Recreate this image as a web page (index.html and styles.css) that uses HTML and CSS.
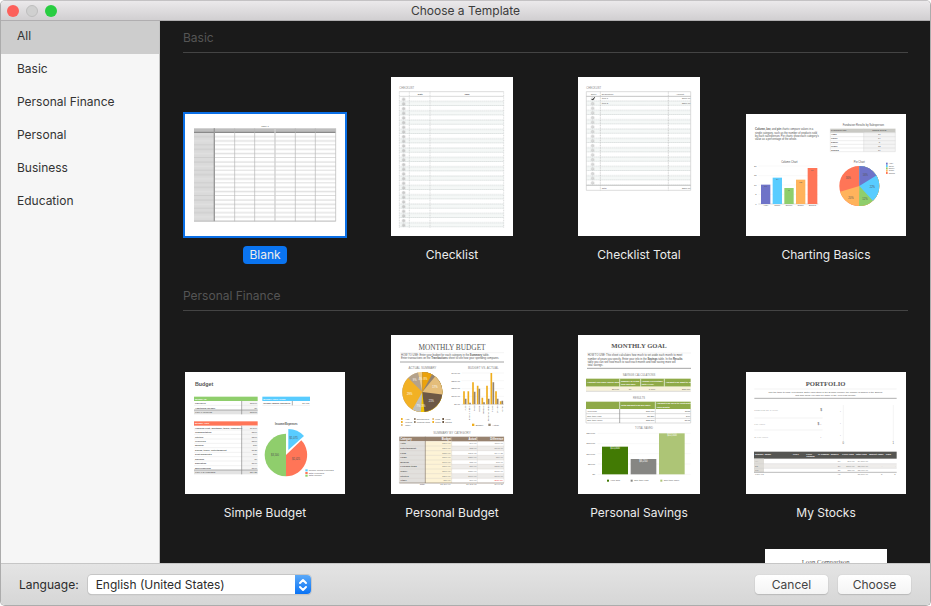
FILE: index.html
```html
<!DOCTYPE html>
<html lang="en">

<head>
    <meta charset="UTF-8">
    <meta name="viewport" content="width=device-width, initial-scale=1.0">
    <title>Choose a Template</title>
    <link rel="stylesheet" href="styles.css">
</head>

<body>

    <div class="window">
        <header class="titlebar">
            <div class="lights">
                <button type="button" class="light close" aria-label="Close"></button>
                <button type="button" class="light minimize" aria-label="Minimize" disabled></button>
                <button type="button" class="light zoom" aria-label="Zoom"></button>
            </div>
            <h1>Choose a Template</h1>
        </header>

        <div class="content">
            <nav class="sidebar">
                <a href="#all" class="active">All</a>
                <a href="#basic">Basic</a>
                <a href="#personal-finance">Personal Finance</a>
                <a href="#personal">Personal</a>
                <a href="#business">Business</a>
                <a href="#education">Education</a>
            </nav>

            <main class="templates">
                <section id="basic">
                    <h2>Basic</h2>
                    <div class="grid">
                        <button type="button" class="card selected">
                            <svg class="sheet landscape" viewBox="30 42 480 366">
                                <defs>
                                    <pattern id="blankRows" patternUnits="userSpaceOnUse" x="57" y="98" width="425" height="38">
                                        <path d="M0 12h425M0 37h425" stroke="#c2c2c2" stroke-width="2" />
                                        <path d="M0 25h425" stroke="#e0e0e0" stroke-width="4" />
                                    </pattern>
                                </defs>
                                <text x="270" y="80" class="mid t7">Table 1</text>
                                <rect x="57" y="85" width="425" height="12" fill="#bdbdbd" />
                                <rect x="57" y="98" width="61" height="266" fill="#dadada" />
                                <rect x="57" y="98" width="425" height="266" fill="url(#blankRows)" />
                                <path d="M57 97h425" stroke="#777" stroke-width="3" />
                                <path d="M118 85v279" stroke="#999" stroke-width="4" />
                                <path d="M179 85v279M239 85v279M361 85v279M421 85v279M482 85v279M57 364h425" stroke="#b4b4b4" stroke-width="2" />
                                <path d="M300 85v279" stroke="#d0d0d0" stroke-width="4" />
                            </svg>
                            <span>Blank</span>
                        </button>

                        <button type="button" class="card">
                            <svg class="sheet portrait" viewBox="33 21 366 477">
                                <defs>
                                    <pattern id="checkRows" patternUnits="userSpaceOnUse" x="58" y="80" width="313" height="28">
                                        <rect y="14" width="313" height="14" fill="#f5f8f7" />
                                        <path d="M0 14h313M0 27h313" stroke="#c4c9c9" stroke-width="2" stroke-dasharray="4 2" />
                                        <circle cx="13" cy="8" r="4" fill="#ccc" stroke="#999" />
                                        <circle cx="13" cy="22" r="4" fill="#ccc" stroke="#999" />
                                    </pattern>
                                </defs>
                                <text x="58" y="58" class="t8 light-text">CHECKLIST</text>
                                <rect x="58" y="80" width="313" height="393" fill="url(#checkRows)" />
                                <path d="M58 65h313M58 79h313" stroke="#ccc" stroke-width="2" />
                                <path d="M58 65v408M88 65v408M150 65v408M371 65v408" stroke="#c8cccc" stroke-width="2" stroke-dasharray="3 2" />
                                <text x="121" y="75" class="mid t7 bold">Date</text>
                                <text x="261" y="75" class="mid t7 bold">Task</text>
                            </svg>
                            <span>Checklist</span>
                        </button>

                        <button type="button" class="card">
                            <svg class="sheet portrait" viewBox="33 21 366 477">
                                <defs>
                                    <pattern id="totalRows" patternUnits="userSpaceOnUse" x="58" y="79" width="313" height="28">
                                        <rect y="14" width="313" height="14" fill="#f5f8f7" />
                                        <path d="M0 14h313M0 27h313" stroke="#c4c9c9" stroke-width="2" stroke-dasharray="4 2" />
                                        <circle cx="19" cy="8" r="4" fill="#ddd" stroke="#999" />
                                        <circle cx="19" cy="22" r="4" fill="#ddd" stroke="#999" />
                                    </pattern>
                                </defs>
                                <text x="58" y="58" class="t8 light-text">CHECKLIST</text>
                                <rect x="58" y="79" width="313" height="267" fill="url(#totalRows)" />
                                <path d="M58 65h313M58 361h313M58 65v296M371 65v296" stroke="#ccc" stroke-width="2" fill="none" />
                                <path d="M58 79h313M58 346h313" stroke="#aaa" stroke-width="2" />
                                <path d="M100 65v296M304 65v296" stroke="#bbb" stroke-width="2" stroke-dasharray="3 2" />
                                <path d="M74 87l3 3 6-8" stroke="#222" stroke-width="3" fill="none" />
                                <text x="80" y="74" class="mid t7">Done</text>
                                <text x="104" y="74" class="t7">Description</text>
                                <text x="339" y="74" class="mid t7">Amount</text>
                                <text class="t7"><tspan x="104" y="88">Item 1</tspan><tspan x="104" y="102">Item 2</tspan><tspan x="104" y="356">Total</tspan></text>
                                <text class="end t7"><tspan x="370" y="88">$100.00</tspan><tspan x="370" y="102">$200.00</tspan><tspan x="370" y="356">$300.00</tspan></text>
                            </svg>
                            <span>Checklist Total</span>
                        </button>

                        <button type="button" class="card">
                            <svg class="sheet landscape" viewBox="33 27 480 366">
                                <text class="t8"><tspan x="60" y="76"><tspan class="bold">Column, bar,</tspan> and <tspan class="bold">pie</tspan> charts compare values in a</tspan><tspan x="60" y="86">single category, such as the number of products sold</tspan><tspan x="60" y="95">by each salesperson. Pie charts show each category’s</tspan><tspan x="60" y="104">value as a percentage of the whole.</tspan></text>
                                <text x="385" y="64" class="mid t8">Fundraiser Results by Salesperson</text>
                                <rect x="286" y="71" width="195" height="12" fill="#c9c9c4" />
                                <rect x="386" y="83" width="95" height="57" fill="#f4f4f4" />
                                <path d="M286 83h195M286 95h195M286 107h195M286 118h195M286 129h195M286 140h195M286 71v69M386 71v69M481 71v69" stroke="#ccc" fill="none" />
                                <text class="t7 bold"><tspan x="288" y="79">PARTICIPANT</tspan><tspan x="288" y="91">Andy</tspan><tspan x="288" y="103">Chloe</tspan><tspan x="288" y="115">Daniel</tspan><tspan x="288" y="126">Grace</tspan><tspan x="288" y="137">Sophia</tspan></text>
                                <text class="mid t7"><tspan x="433" y="79" class="bold">UNITS SOLD</tspan><tspan x="433" y="91">10</tspan><tspan x="433" y="103">14</tspan><tspan x="433" y="115">8</tspan><tspan x="433" y="126">13</tspan><tspan x="433" y="137">19</tspan></text>

                                <text x="163" y="174" class="mid t8">Column Chart</text>
                                <path d="M70 183h180M70 212h180M70 240h180M70 268h180" stroke="#eee" />
                                <path d="M70 297h180" stroke="#999" />
                                <rect x="78" y="239" width="28" height="58" fill="#6e73c8" />
                                <rect x="113" y="218" width="28" height="79" fill="#58ccff" />
                                <rect x="148" y="249" width="28" height="48" fill="#8fce6c" />
                                <rect x="183" y="224" width="28" height="73" fill="#ffb35c" />
                                <rect x="218" y="189" width="29" height="108" fill="#ff7557" />
                                <text class="mid t7"><tspan x="92" y="247">10</tspan><tspan x="127" y="226">14</tspan><tspan x="162" y="257">8</tspan><tspan x="197" y="233">13</tspan><tspan x="232" y="198">19</tspan><tspan x="92" y="304">Andy</tspan><tspan x="127" y="304">Chloe</tspan><tspan x="162" y="304">Daniel</tspan><tspan x="197" y="304">Grace</tspan><tspan x="232" y="304">Sophia</tspan></text>
                                <text class="end t7"><tspan x="65" y="186">20</tspan><tspan x="65" y="214">15</tspan><tspan x="65" y="242">10</tspan><tspan x="65" y="271">5</tspan><tspan x="65" y="299">0</tspan></text>

                                <text x="373" y="174" class="mid t8">Pie Chart</text>
                                <g class="pie" transform="rotate(-90 373 243)" stroke-width="60">
                                    <circle cx="373" cy="243" r="30" pathLength="100" stroke="#ff7557" />
                                    <circle cx="373" cy="243" r="30" pathLength="100" stroke="#ffb35c" stroke-dasharray="70 100" />
                                    <circle cx="373" cy="243" r="30" pathLength="100" stroke="#8fce6c" stroke-dasharray="50 100" />
                                    <circle cx="373" cy="243" r="30" pathLength="100" stroke="#58ccff" stroke-dasharray="38 100" />
                                    <circle cx="373" cy="243" r="30" pathLength="100" stroke="#6e73c8" stroke-dasharray="16 100" />
                                </g>
                                <text class="mid t8"><tspan x="391" y="212">16%</tspan><tspan x="412" y="250">22%</tspan><tspan x="390" y="284">12%</tspan><tspan x="348" y="282">20%</tspan><tspan x="340" y="223">30%</tspan></text>
                                <rect x="453" y="173" width="5" height="6" fill="#6e73c8" />
                                <rect x="453" y="180" width="5" height="6" fill="#58ccff" />
                                <rect x="453" y="187" width="5" height="6" fill="#8fce6c" />
                                <rect x="453" y="194" width="5" height="6" fill="#ffb35c" />
                                <rect x="453" y="201" width="5" height="6" fill="#ff7557" />
                                <text class="t6"><tspan x="461" y="178">Andy</tspan><tspan x="461" y="185">Chloe</tspan><tspan x="461" y="192">Daniel</tspan><tspan x="461" y="199">Grace</tspan><tspan x="461" y="206">Sophia</tspan></text>
                            </svg>
                            <span>Charting Basics</span>
                        </button>
                    </div>
                </section>

                <section id="personal-finance">
                    <h2>Personal Finance</h2>
                    <div class="grid">
                        <button type="button" class="card">
                            <svg class="sheet landscape" viewBox="30 34 480 366">
                                <text x="60" y="77" class="t16 medium">Budget</text>
                                <rect x="57" y="108" width="191" height="13" fill="#8fce6c" />
                                <rect x="262" y="108" width="143" height="13" fill="#58ccff" />
                                <rect x="57" y="182" width="191" height="13" fill="#ff7557" />
                                <text class="t7 bold white"><tspan x="60" y="117">MONEY IN</tspan><tspan x="265" y="117">MONEY LEFT OVER</tspan><tspan x="60" y="190">MONEY OUT</tspan></text>
                                <rect x="200" y="121" width="48" height="26" fill="#f5f5f5" />
                                <rect x="200" y="195" width="48" height="132" fill="#f5f5f5" />
                                <rect x="57" y="148" width="191" height="13" fill="#e3e3e3" />
                                <rect x="57" y="328" width="191" height="13" fill="#e3e3e3" />
                                <path d="M57 134h191M262 134h143M57 208h191M57 221h191M57 235h191M57 248h191M57 261h191M57 275h191M57 288h191M57 301h191M57 315h191" stroke="#d5d5d5" />
                                <path d="M200 121v40M200 195v146M352 121v13M57 148h191M57 328h191" stroke="#888" stroke-width="2" />
                                <text class="t7 bold"><tspan x="60" y="131">Paycheck</tspan><tspan x="60" y="144">Additional income</tspan><tspan x="265" y="131">Income minus expenses</tspan><tspan x="60" y="205">Housing (rent, mortgage, taxes, insurance)</tspan><tspan x="60" y="218">Transportation</tspan><tspan x="60" y="231">Utilities</tspan><tspan x="60" y="244">Groceries</tspan><tspan x="60" y="257">Medical</tspan><tspan x="60" y="271">Dining, travel, entertainment</tspan><tspan x="60" y="284">Debt payments</tspan><tspan x="60" y="297">Savings</tspan><tspan x="60" y="311">Education</tspan><tspan x="60" y="325">Miscellaneous</tspan></text>
                                <text class="t7"><tspan x="60" y="157">TOTAL INCOME</tspan><tspan x="60" y="337">TOTAL EXPENSES</tspan></text>
                                <text class="end t7"><tspan x="246" y="131">$3,500</tspan><tspan x="246" y="144">$0</tspan><tspan x="246" y="157">$3,500</tspan><tspan x="403" y="131">$1,075</tspan><tspan x="246" y="205">$1,200</tspan><tspan x="246" y="218">$300</tspan><tspan x="246" y="231">$200</tspan><tspan x="246" y="244">$300</tspan><tspan x="246" y="257">$50</tspan><tspan x="246" y="271">$125</tspan><tspan x="246" y="284">$50</tspan><tspan x="246" y="297">$0</tspan><tspan x="246" y="311">$100</tspan><tspan x="246" y="325">$100</tspan><tspan x="246" y="337">$2,425</tspan></text>
                                <text x="334" y="194" class="mid t8 bold">Income/Expenses</text>
                                <path d="M333 283V219A64 64 0 0 0 333 347Z" fill="#8fce6c" />
                                <path d="M333 283V347A64 64 0 0 0 379 239Z" fill="#ff7557" />
                                <path d="M340 268V205A63 63 0 0 1 387 226Z" fill="#58ccff" />
                                <text class="mid t8"><tspan x="300" y="287">$3,500</tspan><tspan x="363" y="299">$2,425</tspan><tspan x="356" y="236">$1,075</tspan></text>
                                <rect x="391" y="326" width="7" height="6" fill="#58ccff" />
                                <rect x="391" y="334" width="7" height="6" fill="#ff7557" />
                                <rect x="391" y="342" width="7" height="6" fill="#8fce6c" />
                                <text class="t7"><tspan x="401" y="331">Income minus expenses</tspan><tspan x="401" y="339">Total expenses</tspan><tspan x="401" y="347">Total income</tspan></text>
                            </svg>
                            <span>Simple Budget</span>
                        </button>

                        <button type="button" class="card">
                            <svg class="sheet portrait" viewBox="33 28 366 477">
                                <text x="216" y="72" class="mid serif t22">MONTHLY BUDGET</text>
                                <path d="M60 81h312" stroke="#ddd" />
                                <path d="M60 109h312" stroke="#777" stroke-width="2" />
                                <text class="t8"><tspan x="63" y="91">HOW TO USE: Enter your budget for each category in the <tspan class="bold">Summary</tspan> table.</tspan><tspan x="63" y="101">Enter transactions on the <tspan class="bold">Transactions</tspan> sheet to see how your spending compares.</tspan></text>
                                <text class="mid t9 light-text"><tspan x="127" y="131">ACTUAL SUMMARY</tspan><tspan x="310" y="131">BUDGET VS. ACTUAL</tspan><tspan x="216" y="325">SUMMARY BY CATEGORY</tspan></text>
                                <g class="pie" transform="rotate(-90 127 199)" stroke-width="60">
                                    <circle cx="127" cy="199" r="30" pathLength="100" stroke="#eecb88" />
                                    <circle cx="127" cy="199" r="30" pathLength="100" stroke="#b4a28c" stroke-dasharray="96 100" />
                                    <circle cx="127" cy="199" r="30" pathLength="100" stroke="#f2b124" stroke-dasharray="87 100" />
                                    <circle cx="127" cy="199" r="30" pathLength="100" stroke="#bfbfbb" stroke-dasharray="58 100" />
                                    <circle cx="127" cy="199" r="30" pathLength="100" stroke="#f2c400" stroke-dasharray="51 100" />
                                    <circle cx="127" cy="199" r="30" pathLength="100" stroke="#6d5845" stroke-dasharray="48 100" />
                                    <circle cx="127" cy="199" r="30" pathLength="100" stroke="#e4bd7a" stroke-dasharray="27 100" />
                                    <circle cx="127" cy="199" r="30" pathLength="100" stroke="#94836f" stroke-dasharray="11 100" />
                                    <circle cx="127" cy="199" r="30" pathLength="100" stroke="#eba20c" stroke-dasharray="8 100" />
                                </g>
                                <text class="mid t8 white"><tspan x="89" y="209">29%</tspan><tspan x="154" y="229">21%</tspan><tspan x="165" y="187">17%</tspan><tspan x="104" y="167">9%</tspan><tspan x="121" y="163">4%</tspan><tspan x="136" y="163">8%</tspan><tspan x="115" y="243">7%</tspan><tspan x="130" y="243">3%</tspan></text>
                                <path d="M63 280h5M63 289h5M157 289h5" stroke="#f2b124" stroke-width="6" />
                                <path d="M102 280h5M102 289h5" stroke="#94836f" stroke-width="6" />
                                <path d="M157 280h5M63 298h5" stroke="#e4bd7a" stroke-width="6" />
                                <path d="M187 280h5M187 289h5" stroke="#6d5845" stroke-width="6" />
                                <text class="t6"><tspan x="76" y="282">Auto</tspan><tspan x="110" y="282">Entertainment</tspan><tspan x="166" y="282">Food</tspan><tspan x="196" y="282">Home</tspan><tspan x="76" y="291">Medical</tspan><tspan x="110" y="291">Personal Items</tspan><tspan x="166" y="291">Travel</tspan><tspan x="196" y="291">Utilities</tspan><tspan x="76" y="300">Other</tspan></text>

                                <path d="M245 142h127M245 165h127M245 189h127M245 212h127" stroke="#e8e8e8" />
                                <path d="M245 236h127" stroke="#aaa" />
                                <path d="M252 236v-39M265 236v-39M279 236v-66M293 236v-56M307 236v-20M321 236v-56M334 236v-94M348 236v-39M362 236v-9" stroke="#f0ad1c" stroke-width="5" />
                                <path d="M257 236v-17M270 236v-5M284 236v-38M298 236v-47M312 236v-6M326 236v-17M340 236v-66M353 236v-17M367 236v-11" stroke="#94836f" stroke-width="5" />
                                <text class="end t7"><tspan x="240" y="144">$400.00</tspan><tspan x="240" y="168">$300.00</tspan><tspan x="240" y="191">$200.00</tspan><tspan x="240" y="214">$100.00</tspan><tspan x="240" y="238">$0.00</tspan></text>
                                <g class="end t7">
                                    <text transform="translate(257 240) rotate(-90)">Auto</text>
                                    <text transform="translate(271 240) rotate(-90)">Entertainment</text>
                                    <text transform="translate(285 240) rotate(-90)">Food</text>
                                    <text transform="translate(299 240) rotate(-90)">Home</text>
                                    <text transform="translate(313 240) rotate(-90)">Medical</text>
                                    <text transform="translate(326 240) rotate(-90)">Personal Items</text>
                                    <text transform="translate(340 240) rotate(-90)">Travel</text>
                                    <text transform="translate(354 240) rotate(-90)">Utilities</text>
                                    <text transform="translate(368 240) rotate(-90)">Other</text>
                                </g>
                                <rect x="276" y="294" width="7" height="7" fill="#f0ad1c" />
                                <rect x="325" y="294" width="7" height="7" fill="#94836f" />
                                <text class="t7"><tspan x="287" y="300">Budget</tspan><tspan x="337" y="300">Actual</tspan></text>

                                <rect x="58" y="333" width="314" height="14" fill="#97826f" />
                                <rect x="58" y="347" width="78" height="125" fill="#e2e0dd" />
                                <rect x="136" y="347" width="79" height="125" fill="#fdf3d6" />
                                <path d="M215 368h157M215 396h157M215 423h157M215 451h157" stroke="#eeecea" stroke-width="14" />
                                <path d="M58 361h314M58 375h314M58 389h314M58 403h314M58 416h314M58 430h314M58 444h314M58 458h314M58 347v125M215 333v139M292 333v139M372 333v139" stroke="#cfc9c2" fill="none" />
                                <path d="M136 333v139M58 472h314" stroke="#8a7a6a" stroke-width="2" />
                                <text class="t8 bold white"><tspan x="61" y="343">Category</tspan></text>
                                <text class="end t8 bold white"><tspan x="213" y="343">Budget</tspan><tspan x="290" y="343">Actual</tspan><tspan x="370" y="343">Difference</tspan></text>
                                <text class="t7 bold"><tspan x="61" y="356">Auto</tspan><tspan x="61" y="370">Entertainment</tspan><tspan x="61" y="384">Food</tspan><tspan x="61" y="398">Home</tspan><tspan x="61" y="412">Medical</tspan><tspan x="61" y="425">Personal Items</tspan><tspan x="61" y="439">Travel</tspan><tspan x="61" y="453">Utilities</tspan><tspan x="61" y="467">Other</tspan></text>
                                <text class="end t7 light-text"><tspan x="212" y="356">$200.00</tspan><tspan x="212" y="370">$200.00</tspan><tspan x="212" y="384">$350.00</tspan><tspan x="212" y="398">$300.00</tspan><tspan x="212" y="412">$100.00</tspan><tspan x="212" y="425">$300.00</tspan><tspan x="212" y="439">$500.00</tspan><tspan x="212" y="453">$200.00</tspan><tspan x="212" y="467">$50.00</tspan><tspan x="212" y="479">$2,200.00</tspan></text>
                                <text class="end t7 light-text"><tspan x="290" y="356">$90.00</tspan><tspan x="290" y="370">$32.00</tspan><tspan x="290" y="384">$205.75</tspan><tspan x="290" y="398">$250.00</tspan><tspan x="290" y="412">$35.00</tspan><tspan x="290" y="425">$80.00</tspan><tspan x="290" y="439">$350.00</tspan><tspan x="290" y="453">$100.00</tspan><tspan x="290" y="467">$60.00</tspan><tspan x="290" y="479">$1,202.75</tspan></text>
                                <text class="end t7 light-text"><tspan x="369" y="356">$110.00</tspan><tspan x="369" y="370">$168.00</tspan><tspan x="369" y="384">$144.25</tspan><tspan x="369" y="398">$50.00</tspan><tspan x="369" y="412">$65.00</tspan><tspan x="369" y="425">$220.00</tspan><tspan x="369" y="439">$150.00</tspan><tspan x="369" y="453">$100.00</tspan><tspan x="369" y="467" fill="#e33">($10.00)</tspan><tspan x="369" y="479">$997.25</tspan></text>
                                <text x="134" y="479" class="end t7">Total</text>
                            </svg>
                            <span>Personal Budget</span>
                        </button>

                        <button type="button" class="card">
                            <svg class="sheet portrait" viewBox="33 28 366 477">
                                <text x="216" y="68" class="mid serif t20 medium">MONTHLY GOAL</text>
                                <path d="M60 82h312" stroke="#ddd" />
                                <path d="M60 128h312" stroke="#777" stroke-width="2" />
                                <text class="t8"><tspan x="62" y="92">HOW TO USE: This sheet calculates how much to set aside each month to meet</tspan><tspan x="62" y="102">number of years you specify. Enter your info in the <tspan class="bold">Savings</tspan> table. In the <tspan class="bold">Results</tspan></tspan><tspan x="62" y="112">table you can see how much to save each month and how saving more will</tspan><tspan x="62" y="122">total savings.</tspan></text>
                                <text class="mid t8 light-text"><tspan x="216" y="152">SAVINGS CALCULATIONS</tspan><tspan x="216" y="219">RESULTS</tspan><tspan x="231" y="311">TOTAL SAVED</tspan></text>
                                <rect x="57" y="159" width="314" height="24" fill="#8faa48" />
                                <rect x="57" y="183" width="314" height="14" fill="#f8f2dc" />
                                <rect x="57" y="228" width="314" height="22" fill="#8faa48" />
                                <path d="M158 159v24M221 159v24M292 159v24M158 228v22M265 228v22" stroke="#fff" stroke-width="2" />
                                <path d="M57 197h314M57 264h314M57 278h314M57 292h314M57 250v42M265 250v42M371 250v42" stroke="#ccc" stroke-width="2" fill="none" />
                                <path d="M158 250v42" stroke="#888" stroke-width="2" />
                                <text class="t7 bold white"><tspan x="60" y="172">Amount you have saved now</tspan><tspan x="162" y="168">Number of years</tspan><tspan x="162" y="177">you can save</tspan><tspan x="224" y="168">Annual Percentage</tspan><tspan x="224" y="177">Rate (APR)</tspan><tspan x="296" y="172">Amount you want to save</tspan><tspan x="162" y="240">Total amount you will save</tspan><tspan x="269" y="236">Amount you need to contribute</tspan><tspan x="269" y="246">each month</tspan></text>
                                <text class="t7"><tspan x="60" y="259">Your goal</tspan><tspan x="60" y="273">One-time less</tspan><tspan x="60" y="287">One-time more</tspan></text>
                                <text class="end t7"><tspan x="156" y="192">$1,000</tspan><tspan x="193" y="192">10</tspan><tspan x="265" y="192">1.00%</tspan><tspan x="370" y="192">$15,000</tspan><tspan x="262" y="259">$15,000</tspan><tspan x="262" y="273">$8,250</tspan><tspan x="262" y="287">$22,500</tspan><tspan x="369" y="259">$115</tspan><tspan x="369" y="273">$60</tspan><tspan x="369" y="287">$175</tspan></text>
                                <path d="M92 323h279M92 354h279M92 384h279M92 415h279M92 446h279" stroke="#e8e8e8" />
                                <rect x="105" y="363" width="78" height="83" fill="#427a04" />
                                <rect x="191" y="400" width="77" height="46" fill="#868683" />
                                <rect x="276" y="323" width="77" height="123" fill="#adc576" />
                                <text class="mid t8 white"><tspan x="144" y="371">$15,000</tspan><tspan x="229" y="409">$8,250</tspan><tspan x="315" y="332">$22,500</tspan></text>
                                <text class="end t7"><tspan x="84" y="325">$20,000</tspan><tspan x="84" y="356">$15,000</tspan><tspan x="84" y="387">$10,000</tspan><tspan x="84" y="417">$5,000</tspan><tspan x="84" y="448">$0</tspan></text>
                                <rect x="120" y="462" width="6" height="6" fill="#427a04" />
                                <rect x="191" y="462" width="6" height="6" fill="#868683" />
                                <rect x="280" y="462" width="6" height="6" fill="#adc576" />
                                <text class="t7"><tspan x="130" y="467">Your goal</tspan><tspan x="201" y="467">One-time less</tspan><tspan x="290" y="467">One-time more</tspan></text>
                            </svg>
                            <span>Personal Savings</span>
                        </button>

                        <button type="button" class="card">
                            <svg class="sheet landscape" viewBox="33 19 480 366">
                                <text x="272" y="61" class="mid serif t20 medium">PORTFOLIO</text>
                                <path d="M58 70h427" stroke="#ddd" />
                                <path d="M58 98h427" stroke="#888" stroke-width="2" />
                                <text class="mid t7"><tspan x="272" y="81">Use the table to track your stocks. Enter each stock in the Symbol column, the number of shares in the Shares,</tspan><tspan x="272" y="90">and how much you paid per share in the Your Paid column.</tspan></text>
                                <text class="t8 serif light-text"><tspan x="58" y="135">PORTFOLIO VALUE</tspan><tspan x="58" y="179">CHANGE</tspan><tspan x="58" y="216">% CHANGE</tspan></text>
                                <text class="end t10"><tspan x="261" y="136">$</tspan><tspan x="259" y="179">$ -</tspan><tspan x="259" y="216">-</tspan></text>
                                <path d="M58 157h205M58 193h205M325 118v108M475 118v108" stroke="#ddd" />
                                <text class="end t8"><tspan x="318" y="138">-</tspan><tspan x="318" y="174">-</tspan><tspan x="318" y="210">-</tspan><tspan x="327" y="234">0</tspan><tspan x="477" y="234">1</tspan></text>
                                <rect x="57" y="258" width="428" height="21" fill="#555552" />
                                <rect x="57" y="279" width="30" height="41" fill="#dfddd8" />
                                <rect x="87" y="294" width="398" height="14" fill="#efedeb" />
                                <path d="M57 294h428M57 308h428" stroke="#ccc" />
                                <path d="M57 320h428" stroke="#999" stroke-width="2" />
                                <text class="t7 bold white"><tspan x="60" y="267">Symbol</tspan><tspan x="89" y="267">Name</tspan><tspan x="174" y="267">Price</tspan><tspan x="214" y="267">Price</tspan><tspan x="214" y="275">Change</tspan><tspan x="249" y="267">% Change</tspan><tspan x="287" y="267">Shares</tspan><tspan x="322" y="267">Price Paid</tspan><tspan x="362" y="267">Total Paid</tspan><tspan x="403" y="267">Market Value</tspan><tspan x="452" y="267">Gain</tspan></text>
                                <text class="t7 light-text"><tspan x="60" y="290">AA</tspan><tspan x="60" y="304">BB</tspan><tspan x="60" y="317">CC</tspan><tspan x="60" y="329">TOTALS</tspan></text>
                                <text class="end t7 light-text"><tspan x="316" y="290">50</tspan><tspan x="316" y="304">20</tspan><tspan x="316" y="317">25</tspan><tspan x="316" y="329">95</tspan><tspan x="359" y="290">$90.00</tspan><tspan x="359" y="304">$100.00</tspan><tspan x="359" y="317">$80.00</tspan><tspan x="399" y="290">$4,500.00</tspan><tspan x="399" y="304">$2,000.00</tspan><tspan x="399" y="317">$2,000.00</tspan><tspan x="399" y="329">$8,500.00</tspan><tspan x="442" y="304">-</tspan><tspan x="482" y="304">-</tspan><tspan x="442" y="329">$</tspan><tspan x="482" y="329">$</tspan></text>
                            </svg>
                            <span>My Stocks</span>
                        </button>

                        <div class="card loan">
                            <svg class="sheet portrait" viewBox="0 0 366 477">
                                <text x="182" y="46" class="mid serif t20">Loan Comparison</text>
                            </svg>
                        </div>
                    </div>
                </section>
            </main>
        </div>

        <footer class="bottombar">
            <label for="language">Language:</label>
            <div class="select-box">
                <select id="language" name="language">
                    <option>English (United States)</option>
                </select>
                <span class="stepper">
                    <svg width="10" height="14" viewBox="0 0 10 14">
                        <path d="M2 5l3-3 3 3M2 9l3 3 3-3" />
                    </svg>
                </span>
            </div>
            <div class="actions">
                <button type="button">Cancel</button>
                <button type="button">Choose</button>
            </div>
        </footer>
    </div>

</body>

</html>
```

FILE: styles.css
```css
* {
    box-sizing: border-box;
}

body {
    margin: 0;
    background-color: #fff;
    font-family: Inter, Roboto, sans-serif;
    font-size: 12px;
    color: #2b2b2b;
}

button,
select {
    font: inherit;
    color: inherit;
    padding: 0;
    border: none;
}

.window {
    display: flex;
    flex-direction: column;
    height: 100vh;
    border: 1px solid #acacac;
    border-top-color: #c4c2c4;
    border-radius: 5px;
    overflow: hidden;
}

/* title bar */
.titlebar {
    display: grid;
    grid-template-columns: 1fr auto 1fr;
    align-items: center;
    flex: none;
    height: 20px;
    padding: 0 6px;
    background: linear-gradient(#ebe9eb, #d1cfd1);
    border-bottom: 1px solid #b0aeb0;
}

.titlebar h1 {
    margin: 0;
    font-size: 12px;
    font-weight: normal;
    line-height: 18px;
    color: #3c3c3c;
}

.lights {
    display: flex;
    gap: 7px;
}

.light {
    width: 12px;
    height: 12px;
    border-radius: 50%;
}

.close {
    background-color: #fc605b;
}

.minimize {
    background-color: #d0d0d0;
    border: 1px solid #bdbdbd;
}

.zoom {
    background-color: #28cd41;
}

/* sidebar + templates */
.content {
    display: flex;
    flex: 1;
    min-height: 0;
}

.sidebar {
    flex: none;
    width: 159px;
    background-color: #f6f6f6;
    border-right: 1px solid #c4c4c4;
}

.sidebar a {
    display: block;
    height: 33px;
    padding-left: 16px;
    line-height: 30px;
    color: #333;
    text-decoration: none;
}

.sidebar .active {
    background-color: #cdcdcd;
}

.templates {
    flex: 1;
    padding: 9px 22px 0 23px;
    background-color: #1a1a1a;
    overflow: hidden;
}

.templates section {
    margin-bottom: 24px;
}

.templates h2 {
    margin: 0 0 24px;
    padding-bottom: 6px;
    border-bottom: 1px solid #444;
    font-size: 12px;
    font-weight: normal;
    line-height: 16px;
    color: #555;
}

.grid {
    display: grid;
    grid-template-columns: repeat(4, 1fr);
    gap: 27px 23px;
}

.card {
    display: flex;
    flex-direction: column;
    align-items: center;
    justify-content: flex-end;
    gap: 10px;
    background: none;
    color: #ececec;
}

.card span {
    padding: 0 6px;
    border-radius: 4px;
    line-height: 18px;
}

.selected span {
    background-color: #0a74f0;
}

.selected .sheet {
    box-shadow: 0 0 0 2px #0a6fe6;
}

.loan {
    grid-column: 4;
}

/* page previews */
.sheet {
    display: block;
    background-color: #fff;
    fill: #555;
    font-family: "Liberation Sans", Arial, sans-serif;
}

.landscape {
    width: 160px;
    height: 122px;
}

.portrait {
    width: 122px;
    height: 159px;
}

.pie circle {
    fill: none;
}

.mid { text-anchor: middle; }
.end { text-anchor: end; }
.bold { font-weight: bold; }
.medium { font-weight: 600; }
.white { fill: #fff; }
.light-text { fill: #888; }
.serif { font-family: "Liberation Serif", "Times New Roman", serif; }
.t6 { font-size: 6px; }
.t7 { font-size: 7px; }
.t8 { font-size: 8px; }
.t9 { font-size: 9px; }
.t10 { font-size: 10px; }
.t16 { font-size: 16px; }
.t20 { font-size: 20px; }
.t22 { font-size: 22px; }

/* bottom bar */
.bottombar {
    display: flex;
    align-items: center;
    flex: none;
    height: 42px;
    padding: 0 19px 0 18px;
    background: linear-gradient(#e4e4e4, #d6d6d6);
    border-top: 1px solid #c6c6c6;
}

.select-box {
    position: relative;
    width: 223px;
    height: 19px;
    margin-left: 9px;
    border-radius: 4px;
    box-shadow: 0 0 0 1px #c6c6c6, 0 1px 1px #aaa;
    overflow: hidden;
}

.select-box select {
    width: 100%;
    height: 19px;
    padding: 0 24px 0 8px;
    appearance: none;
    background-color: #fff;
}

.stepper {
    position: absolute;
    top: 0;
    right: 0;
    display: flex;
    align-items: center;
    justify-content: center;
    width: 16px;
    height: 19px;
    background: linear-gradient(#5ba9f8, #0a73f5);
    pointer-events: none;
}

.stepper path {
    fill: none;
    stroke: #fff;
    stroke-width: 2;
    stroke-linecap: round;
    stroke-linejoin: round;
}

.actions {
    display: flex;
    gap: 10px;
    margin-left: auto;
}

.actions button {
    width: 73px;
    height: 19px;
    border-radius: 4px;
    background: linear-gradient(#fff, #f4f4f4);
    box-shadow: 0 0 1px #aaa, 0 1px 1px #bbb;
    color: #444;
}
```
